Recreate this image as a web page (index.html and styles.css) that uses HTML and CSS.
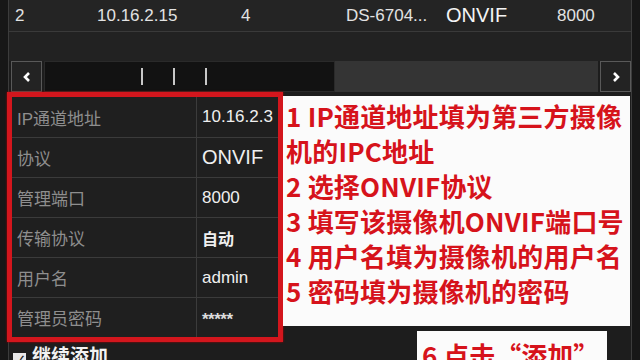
FILE: index.html
```html
<!DOCTYPE html>
<html lang="zh-CN">

<head>
  <meta charset="UTF-8">
  <meta name="viewport" content="width=device-width, initial-scale=1.0">
  <title>添加IP通道</title>
  <link rel="stylesheet" href="styles.css">
</head>

<body>
  <div class="screen">
    <div class="list-row">
      <span>2</span>
      <span>10.16.2.15</span>
      <span>4</span>
      <span>DS-6704...</span>
      <span class="big">ONVIF</span>
      <span>8000</span>
    </div>
    <div class="list-empty"></div>

    <div class="hscroll">
      <span class="sbtn">
        <svg width="10" height="12" viewBox="0 0 10 12"><polyline points="7,2 3,6 7,10" fill="none" stroke="#fff" stroke-width="2.6"/></svg>
      </span>
      <div class="track">
        <div class="thumb"><i></i><i></i><i></i></div>
      </div>
      <span class="sbtn">
        <svg width="10" height="12" viewBox="0 0 10 12"><polyline points="3,2 7,6 3,10" fill="none" stroke="#fff" stroke-width="2.6"/></svg>
      </span>
    </div>

    <div class="lower">
      <div class="form-col">
        <div class="form">
          <div class="frow"><span class="lbl">IP通道地址</span><span class="val">10.16.2.3</span></div>
          <div class="frow"><span class="lbl">协议</span><span class="val big">ONVIF</span></div>
          <div class="frow"><span class="lbl">管理端口</span><span class="val">8000</span></div>
          <div class="frow"><span class="lbl">传输协议</span><span class="val cn">自动</span></div>
          <div class="frow"><span class="lbl">用户名</span><span class="val">admin</span></div>
          <div class="frow"><span class="lbl">管理员密码</span><span class="val pwd">*****</span></div>
        </div>
        <div class="cont"><span class="chk">✓</span>继续添加</div>
      </div>

      <div class="note">
        <div>1 IP通道地址填为第三方摄像</div>
        <div>机的IPC地址</div>
        <div>2 选择ONVIF协议</div>
        <div>3 填写该摄像机ONVIF端口号</div>
        <div>4 用户名填为摄像机的用户名</div>
        <div>5 密码填为摄像机的密码</div>
      </div>
    </div>

    <div class="note-add">6 点击“添加”</div>
  </div>
</body>

</html>
```

FILE: styles.css
```css
* {
  margin: 0;
  padding: 0;
  box-sizing: border-box;
}

body {
  width: 640px;
  height: 360px;
  overflow: hidden;
  background: #171717;
  font-family: "Liberation Sans", Arial, "Noto Sans CJK SC", sans-serif;
}

.screen {
  position: relative;
  margin-left: 8px;
  width: 624px;
  height: 360px;
  border-left: 1px solid #3c3c3c;
  border-right: 1px solid #3c3c3c;
  background: #1d1d1d;
}

/* 通道列表 */
.list-row {
  display: grid;
  grid-template-columns: 82px 144px 105px 100px 111px auto;
  align-items: center;
  height: 32px;
  padding-left: 6px;
  background: #242424;
  border-bottom: 1px solid #3a3a3a;
  color: #e2e2e2;
  font-size: 17px;
}

.list-row .big {
  font-size: 20px;
  color: #f4f4f4;
}

.list-empty {
  height: 29px;
  background: #222;
}

/* 横向滚动条 */
.hscroll {
  display: flex;
  gap: 2px;
  height: 31px;
  padding-left: 2px;
}

.sbtn {
  display: flex;
  align-items: center;
  justify-content: center;
  width: 31px;
  border: 1px solid #595959;
  background: #232323;
}

.track {
  flex: 1;
  background: #343434;
}

.thumb {
  display: flex;
  gap: 30px;
  align-items: center;
  width: 291px;
  height: 100%;
  padding-left: 96px;
  background: #121212;
  border: 1px solid #2a2a2a;
}

.thumb i {
  width: 2px;
  height: 17px;
  background: #c8c8c8;
}

/* 下方表单 */
.lower {
  display: flex;
  align-items: flex-start;
}

.form-col {
  margin-left: -2px;
}

.form {
  width: 276px;
  border: 5px solid #d3161d;
  box-shadow: 0 0 2px #a00;
  background: #1f1f1f;
}

.frow {
  display: flex;
  height: 40px;
  border-top: 1px solid #3b3b3b;
}

.frow:first-child {
  border-top: none;
}

.lbl {
  display: flex;
  align-items: center;
  width: 185px;
  padding-left: 5px;
  border-right: 1px solid #3b3b3b;
  color: #8e8e8e;
  font-size: 17px;
  font-family: "Liberation Sans", "Noto Sans CJK SC", sans-serif;
}

.val {
  display: flex;
  align-items: center;
  padding-left: 5px;
  color: #efefef;
  font-size: 17px;
}

.val.big {
  font-size: 20px;
}

.val.cn {
  font-weight: bold;
  font-family: "Noto Sans CJK SC", sans-serif;
  font-size: 16px;
}

.val.pwd {
  padding-top: 4px;
  font-size: 17px;
  font-weight: bold;
  letter-spacing: -0.5px;
  color: #dcdcdc;
}

.cont {
  display: flex;
  align-items: center;
  gap: 6px;
  margin-top: 1px;
  padding-left: 6px;
  color: #f2f2f2;
  font-family: "Noto Sans CJK SC", sans-serif;
  font-weight: bold;
  font-size: 19px;
  line-height: 22px;
}

.chk {
  display: flex;
  align-items: center;
  justify-content: center;
  width: 13px;
  height: 13px;
  margin-top: 10px;
  background: #e8e8e8;
  color: #222;
  font-size: 12px;
  line-height: 1;
}

/* 标注 */
.note {
  width: 347px;
  height: 230px;
  margin-top: 4px;
  padding: 2px 0 0 3px;
  background: #fbfbfb;
  color: #d6131b;
  font-family: "Noto Sans CJK SC", sans-serif;
  font-weight: bold;
  font-size: 26px;
  line-height: 35px;
  letter-spacing: 0.2px;
  white-space: nowrap;
  overflow: hidden;
}

.note-add {
  position: absolute;
  left: 408px;
  top: 331px;
  width: 190px;
  height: 40px;
  padding: 6px 0 0 5px;
  background: #fbfbfb;
  color: #d6131b;
  font-family: "Noto Sans CJK SC", sans-serif;
  font-weight: bold;
  font-size: 26px;
  line-height: 35px;
  white-space: nowrap;
}
```
